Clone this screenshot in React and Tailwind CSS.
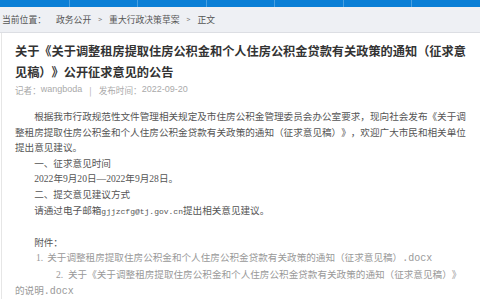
import React from 'react';

const body = { fontFamily: '"Liberation Serif", "Noto Sans CJK SC", serif' };
const sans = { fontFamily: '"Noto Sans CJK SC", "Liberation Sans", sans-serif' };
const mail = 'font-["Liberation_Mono",monospace] text-[8px]';
const docx = 'font-["Liberation_Mono",monospace] text-[10px]';

const navItems = ['', '', '', '', '', '', ''];

export default function App() {
  return (
    <div className="w-[480px] h-[300px] overflow-hidden bg-white [text-spacing-trim:space-all]" style={sans}>
      {/* top nav strip */}
      <div className="grid grid-cols-7 h-[7px] bg-[#0a7fd6]">
        {navItems.map((_, i) => (
          <div key={i} className={i === 0 ? '' : 'border-l border-white/25'} />
        ))}
      </div>

      {/* breadcrumb */}
      <div className="h-[26px] flex items-center pl-[2px] bg-[#eef0f4] border-b border-[#dcdee3] text-[8.8px] text-[#555]">
        <span>当前位置：</span>
        <span className="ml-[10px]">政务公开</span>
        <span className="mx-[7px] text-[7px] text-[#777]">&gt;</span>
        <span>重大行政决策草案</span>
        <span className="mx-[7px] text-[7px] text-[#777]">&gt;</span>
        <span>正文</span>
      </div>

      {/* article */}
      <div className="ml-[1px] border-l border-[#e6e6e6] pl-[13px] pt-[8px] w-[467px]">
        <h1 className="text-[12.2px] leading-[21px] font-bold text-[#333]">
          关于《关于调整租房提取住房公积金和个人住房公积金贷款有关政策的通知（征求意见稿）》公开征求意见的公告
        </h1>
        <div className="flex items-center h-[14px] text-[8.6px] text-[#aaa]">
          <span>记者：</span>
          <span className="font-['Liberation_Sans'] text-[9px]">wangboda</span>
          <span className="mx-[7px]">|</span>
          <span>发布时间：</span>
          <span className="font-['Liberation_Sans'] text-[9px]">2022-09-20</span>
        </div>

        <div className="mt-[12px] text-[9.6px] leading-[15.6px] text-[#555]" style={body}>
          <p className="indent-[2em]">
            根据我市行政规范性文件管理相关规定及市住房公积金管理委员会办公室要求，现向社会发布《关于调整租房提取住房公积金和个人住房公积金贷款有关政策的通知（征求意见稿）》，欢迎广大市民和相关单位提出意见建议。
          </p>
          <p className="indent-[2em]">一、征求意见时间</p>
          <p className="indent-[2em]">2022年9月20日—2022年9月28日。</p>
          <p className="indent-[2em]">二、提交意见建议方式</p>
          <p className="indent-[2em]">
            请通过电子邮箱<span className={mail}>gjjzcfg@tj.gov.cn</span>提出相关意见建议。
          </p>
          <p className="h-[15.6px]" />
          <p className="indent-[2em]">附件：</p>
          <p className="pl-[21px] text-[#999]">
            <span className="mr-[4px]">1.</span>
            关于调整租房提取住房公积金和个人住房公积金贷款有关政策的通知（征求意见稿）<span className={docx}>.docx</span>
          </p>
          <p className="indent-[41px] text-[#999]">
            2.&nbsp;&nbsp;关于《关于调整租房提取住房公积金和个人住房公积金贷款有关政策的通知（征求意见稿）》的说明<span className={docx}>.docx</span>
          </p>
        </div>
      </div>
    </div>
  );
}
